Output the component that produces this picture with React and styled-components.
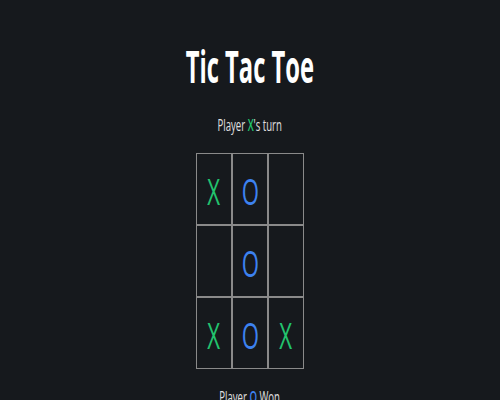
import React from 'react'
import styled, { createGlobalStyle } from 'styled-components'

const board = ['X', 'O', null, null, 'O', null, 'X', 'O', 'X']

export default function App() {
    return (
        <>
            <GlobalStyle />
            <Page>
                <Title>
                    <Squish $sx={0.54}>Tic Tac Toe</Squish>
                </Title>
                <Status>
                    <Squish $sx={0.6}>
                        Player <Mark $player="X">X</Mark>'s turn
                    </Squish>
                </Status>
                <Board>
                    {board.map((value, i) => (
                        <Cell key={i}>
                            {value && (
                                <CellMark $player={value}>
                                    <Squish $sx={0.6}>{value}</Squish>
                                </CellMark>
                            )}
                        </Cell>
                    ))}
                </Board>
                <Status $bottom>
                    <Squish $sx={0.6}>
                        Player <Mark $player="O">O</Mark> Won
                    </Squish>
                </Status>
            </Page>
        </>
    )
}

const GlobalStyle = createGlobalStyle`
    html, body {
        margin: 0;
        background: #16191d;
    }
    body {
        font-family: "Comic Sans MS", "Open Sans", sans-serif;
        color: #e2e2e2;
        overflow: hidden;
    }
`

const Page = styled.div`
    display: flex;
    flex-direction: column;
    align-items: center;
    height: 400px;
    padding-top: 44px;
    box-sizing: border-box;
`

const Squish = styled.span`
    display: inline-block;
    white-space: nowrap;
    transform: scaleX(${(p) => p.$sx});
    transform-origin: center;
`

const Title = styled.h1`
    margin: 0;
    font-size: 44px;
    line-height: 44px;
    font-weight: 700;
    color: #ffffff;
`

const Status = styled.div`
    margin-top: ${(p) => (p.$bottom ? '20px' : '29px')};
    font-size: 16px;
    line-height: 16px;
    color: #e0e0e0;
`

const Mark = styled.span`
    font-weight: 600;
    color: ${(p) => (p.$player === 'X' ? '#22c36e' : '#3d82f0')};
`

const Board = styled.div`
    margin-top: 20px;
    display: grid;
    grid-template-columns: repeat(3, 36px);
    grid-template-rows: repeat(3, 72px);
`

const Cell = styled.div`
    box-sizing: border-box;
    border: 1px solid #8a8a8a;
    display: flex;
    align-items: center;
    justify-content: center;
`

const CellMark = styled.span`
    font-size: 37px;
    line-height: 37px;
    font-weight: 500;
    color: ${(p) => (p.$player === 'X' ? '#22c36e' : '#3d82f0')};
    padding-top: 3px;
`
